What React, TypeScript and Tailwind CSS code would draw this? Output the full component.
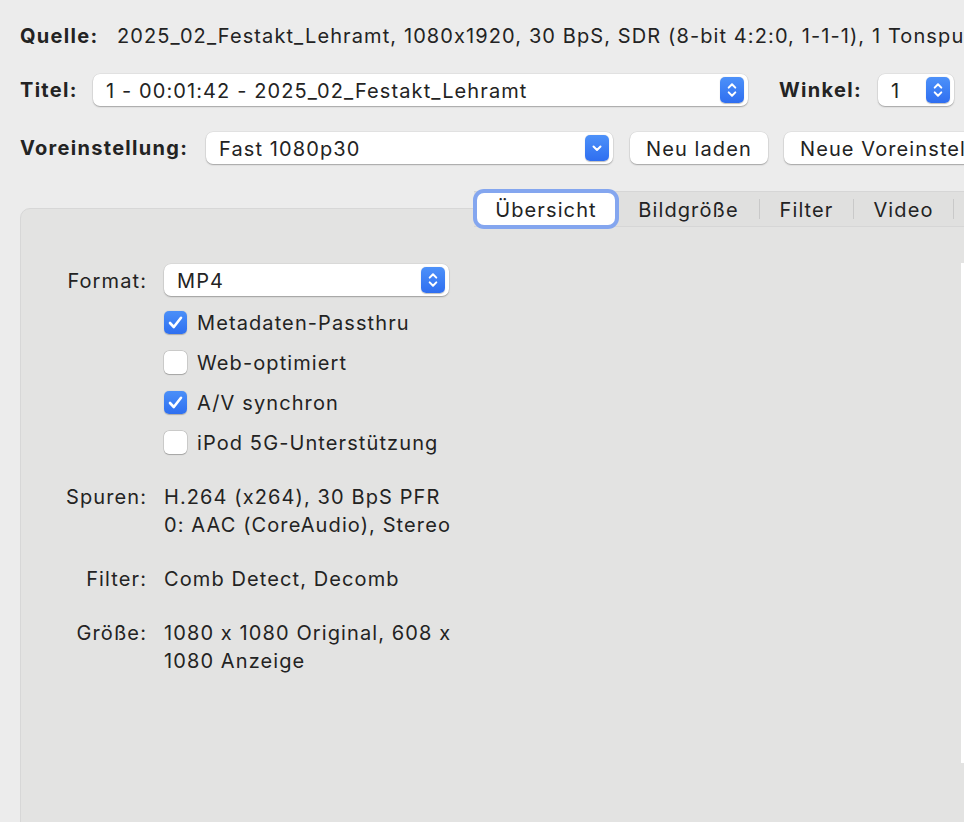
import React from "react";

const font = { fontFamily: "Inter, 'Noto Sans', 'Liberation Sans', sans-serif" };

function Stepper({ single = false }: { single?: boolean }) {
  return (
    <div className="w-[24px] h-[26px] rounded-[5px] bg-gradient-to-b from-[#4d91f9] to-[#2f6ef0] flex items-center justify-center shrink-0 shadow-[0_0.5px_1px_rgba(0,0,0,0.25)]">
      <svg width="24" height="26" viewBox="0 0 24 26" fill="none" stroke="white" strokeWidth="2" strokeLinecap="round" strokeLinejoin="round">
        {single ? (
          <path d="M8.5 11.5 L12 15 L15.5 11.5" />
        ) : (
          <>
            <path d="M8.7 10.6 L12 7.3 L15.3 10.6" />
            <path d="M8.7 15.4 L12 18.7 L15.3 15.4" />
          </>
        )}
      </svg>
    </div>
  );
}

function Select({ text, className, single }: { text: string; className: string; single?: boolean }) {
  return (
    <div
      className={
        "h-[32px] bg-white rounded-[7px] flex items-center pl-[13px] pr-[4px] shadow-[0_0_0_0.5px_rgba(0,0,0,0.08),0_1px_1.5px_rgba(0,0,0,0.28)] shrink-0 " +
        className
      }
    >
      <span className="flex-1 whitespace-nowrap overflow-hidden pt-[1px]">{text}</span>
      <Stepper single={single} />
    </div>
  );
}

function Button({ text, className }: { text: string; className: string }) {
  return (
    <div
      className={
        "h-[32px] bg-white rounded-[7px] flex items-center pl-[16px] pt-[1px] whitespace-nowrap overflow-hidden shrink-0 shadow-[0_0_0_0.5px_rgba(0,0,0,0.08),0_1px_1.5px_rgba(0,0,0,0.28)] " +
        className
      }
    >
      {text}
    </div>
  );
}

function Check({ checked, label }: { checked: boolean; label: string }) {
  return (
    <div className="h-[40px] flex items-center">
      {checked ? (
        <div className="w-[23px] h-[23px] rounded-[5px] bg-gradient-to-b from-[#4b8ff8] to-[#2f6ff0] flex items-center justify-center shadow-[0_0.5px_1px_rgba(0,0,0,0.25)]">
          <svg width="23" height="23" viewBox="0 0 23 23" fill="none" stroke="white" strokeWidth="2.6" strokeLinecap="round" strokeLinejoin="round">
            <path d="M6 12 L9.8 16 L17 6.8" />
          </svg>
        </div>
      ) : (
        <div className="w-[23px] h-[23px] rounded-[5px] bg-white shadow-[0_0_0_0.5px_rgba(0,0,0,0.18),0_0.5px_1px_rgba(0,0,0,0.2)]" />
      )}
      <span className="ml-[10px] whitespace-nowrap pt-[1px]">{label}</span>
    </div>
  );
}

function Sep() {
  return <div className="w-px h-[20px] bg-[#c9c9c9] shrink-0" />;
}

export default function App() {
  return (
    <div
      className="w-[964px] h-[822px] overflow-hidden bg-[#ececec] text-[#232323] text-[20px] leading-[28px] tracking-[1.1px] [font-feature-settings:'calt'_0]"
      style={font}
    >
      {/* Quelle */}
      <div className="flex items-center h-[32px] mt-[20px] pl-[20px] whitespace-nowrap">
        <span className="font-bold tracking-[1.3px] w-[97px] shrink-0">Quelle:</span>
        <span>2025_02_Festakt_Lehramt, 1080x1920, 30 BpS, SDR (8-bit 4:2:0, 1-1-1), 1 Tonspur</span>
      </div>

      {/* Titel */}
      <div className="flex items-center h-[32px] mt-[22px] pl-[20px] whitespace-nowrap">
        <span className="font-bold tracking-[1.3px] w-[73px] shrink-0">Titel:</span>
        <Select text="1 - 00:01:42 - 2025_02_Festakt_Lehramt" className="w-[655px]" />
        <span className="font-bold tracking-[1.3px] ml-[31px] w-[99px] shrink-0">Winkel:</span>
        <Select text="1" className="w-[76px]" />
      </div>

      {/* Voreinstellung */}
      <div className="flex items-center h-[32px] mt-[26px] pl-[20px] whitespace-nowrap">
        <span className="font-bold tracking-[1.3px] w-[186px] shrink-0">Voreinstellung:</span>
        <Select text="Fast 1080p30" className="w-[407px]" single />
        <Button text="Neu laden" className="ml-[17px] w-[138px]" />
        <Button text="Neue Voreinstellung" className="ml-[16px] w-[230px]" />
      </div>

      {/* Panel */}
      <div className="mt-[44px] ml-[20px] w-[1100px] h-[700px] bg-[#e3e3e2] border border-[#d7d7d7] rounded-tl-[10px]">
        {/* Tabs */}
        <div className="relative z-10 -mt-[18px] ml-[453px] h-[36px] flex items-center bg-[#e0e0df] border-y border-[#d6d6d6] whitespace-nowrap">
          <div className="w-[144px] h-[36px] flex items-center justify-center">
            <div className="w-[138px] h-[32px] bg-white rounded-[7px] flex items-center justify-center pt-[1px] ring-[4px] ring-[#84a6ef] shadow-[0_0.5px_1px_rgba(0,0,0,0.2)]">
              Übersicht
            </div>
          </div>
          <div className="w-[141px] flex justify-center pt-[1px]">Bildgröße</div>
          <Sep />
          <div className="w-[93px] flex justify-center pt-[1px]">Filter</div>
          <Sep />
          <div className="w-[99px] flex justify-center pt-[1px]">Video</div>
          <Sep />
          <div className="w-[100px] flex justify-center pt-[1px]">Audio</div>
        </div>

        <div className="flex">
          {/* Left content */}
          <div className="w-[940px] shrink-0 pt-[37px]">
            <div className="flex items-center h-[32px]">
              <span className="w-[126px] text-right shrink-0 pt-[1px]">Format:</span>
              <Select text="MP4" className="ml-[17px] w-[285px]" />
            </div>
            <div className="ml-[143px] mt-[6px]">
              <Check checked label="Metadaten-Passthru" />
              <Check checked={false} label="Web-optimiert" />
              <Check checked label="A/V synchron" />
              <Check checked={false} label="iPod 5G-Unterstützung" />
            </div>

            <div className="flex mt-[21px]">
              <span className="w-[126px] text-right shrink-0">Spuren:</span>
              <div className="ml-[17px]">
                <div>H.264 (x264), 30 BpS PFR</div>
                <div>0: AAC (CoreAudio), Stereo</div>
              </div>
            </div>
            <div className="flex mt-[26px]">
              <span className="w-[126px] text-right shrink-0">Filter:</span>
              <div className="ml-[17px]">Comb Detect, Decomb</div>
            </div>
            <div className="flex mt-[26px]">
              <span className="w-[126px] text-right shrink-0">Größe:</span>
              <div className="ml-[17px] w-[310px]">
                <div>1080 x 1080 Original, 608 x</div>
                <div>1080 Anzeige</div>
              </div>
            </div>
          </div>
          {/* Preview strip */}
          <div className="mt-[36px] w-[200px] h-[500px] bg-white shrink-0" />
        </div>
      </div>
    </div>
  );
}
